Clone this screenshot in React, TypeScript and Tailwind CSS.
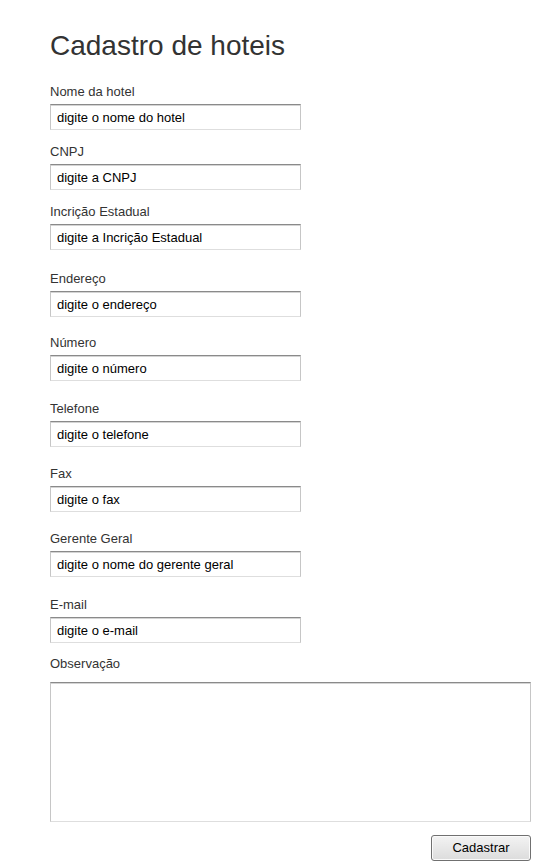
const fields = [
  { label: "Nome da hotel", value: "digite o nome do hotel", mt: "mt-[22px]" },
  { label: "CNPJ", value: "digite a CNPJ", mt: "mt-[14px]" },
  { label: "Incrição Estadual", value: "digite a Incrição Estadual", mt: "mt-[14px]" },
  { label: "Endereço", value: "digite o endereço", mt: "mt-[21px]" },
  { label: "Número", value: "digite o número", mt: "mt-[18px]" },
  { label: "Telefone", value: "digite o telefone", mt: "mt-[20px]" },
  { label: "Fax", value: "digite o fax", mt: "mt-[19px]" },
  { label: "Gerente Geral", value: "digite o nome do gerente geral", mt: "mt-[19px]" },
  { label: "E-mail", value: "digite o e-mail", mt: "mt-[20px]" },
]

const boxBorder =
  "border border-[#c6c6c6] border-t-[#8a8a8a] border-b-[#dedede] shadow-[inset_0_1px_0_#d4d4d4]"

export default function App() {
  return (
    <div className="min-h-[868px] bg-white pl-[50px] pt-[30px] font-['Liberation_Sans',Arial,sans-serif] text-[#333]">
      <h1 className="text-[28px] leading-[32px] text-[#333]">Cadastro de hoteis</h1>

      <form className="flex w-[481px] flex-col" onSubmit={(e) => e.preventDefault()}>
        {fields.map((f) => (
          <div key={f.label} className={`flex flex-col ${f.mt}`}>
            <label className="text-[13px] leading-[16px] text-[#333]">{f.label}</label>
            <input
              type="text"
              defaultValue={f.value}
              className={`mt-[4px] h-[26px] w-[251px] bg-white px-[6px] text-[13px] text-black outline-none ${boxBorder}`}
            />
          </div>
        ))}

        {/* Observação */}
        <label className="mt-[13px] text-[13px] leading-[16px] text-[#333]">Observação</label>
        <textarea
          className={`mt-[10px] h-[140px] w-[481px] resize-none bg-white p-1 text-[13px] text-black outline-none ${boxBorder}`}
        />

        <div className="mt-[13px] flex justify-end">
          <button
            type="submit"
            className="h-[26px] w-[100px] rounded-[3px] border border-[#707070] bg-linear-to-b from-[#f3f3f3] to-[#dcdcdc] text-[13px] text-black shadow-[inset_0_0_0_1px_#fafafa]"
          >
            Cadastrar
          </button>
        </div>
      </form>
    </div>
  )
}
